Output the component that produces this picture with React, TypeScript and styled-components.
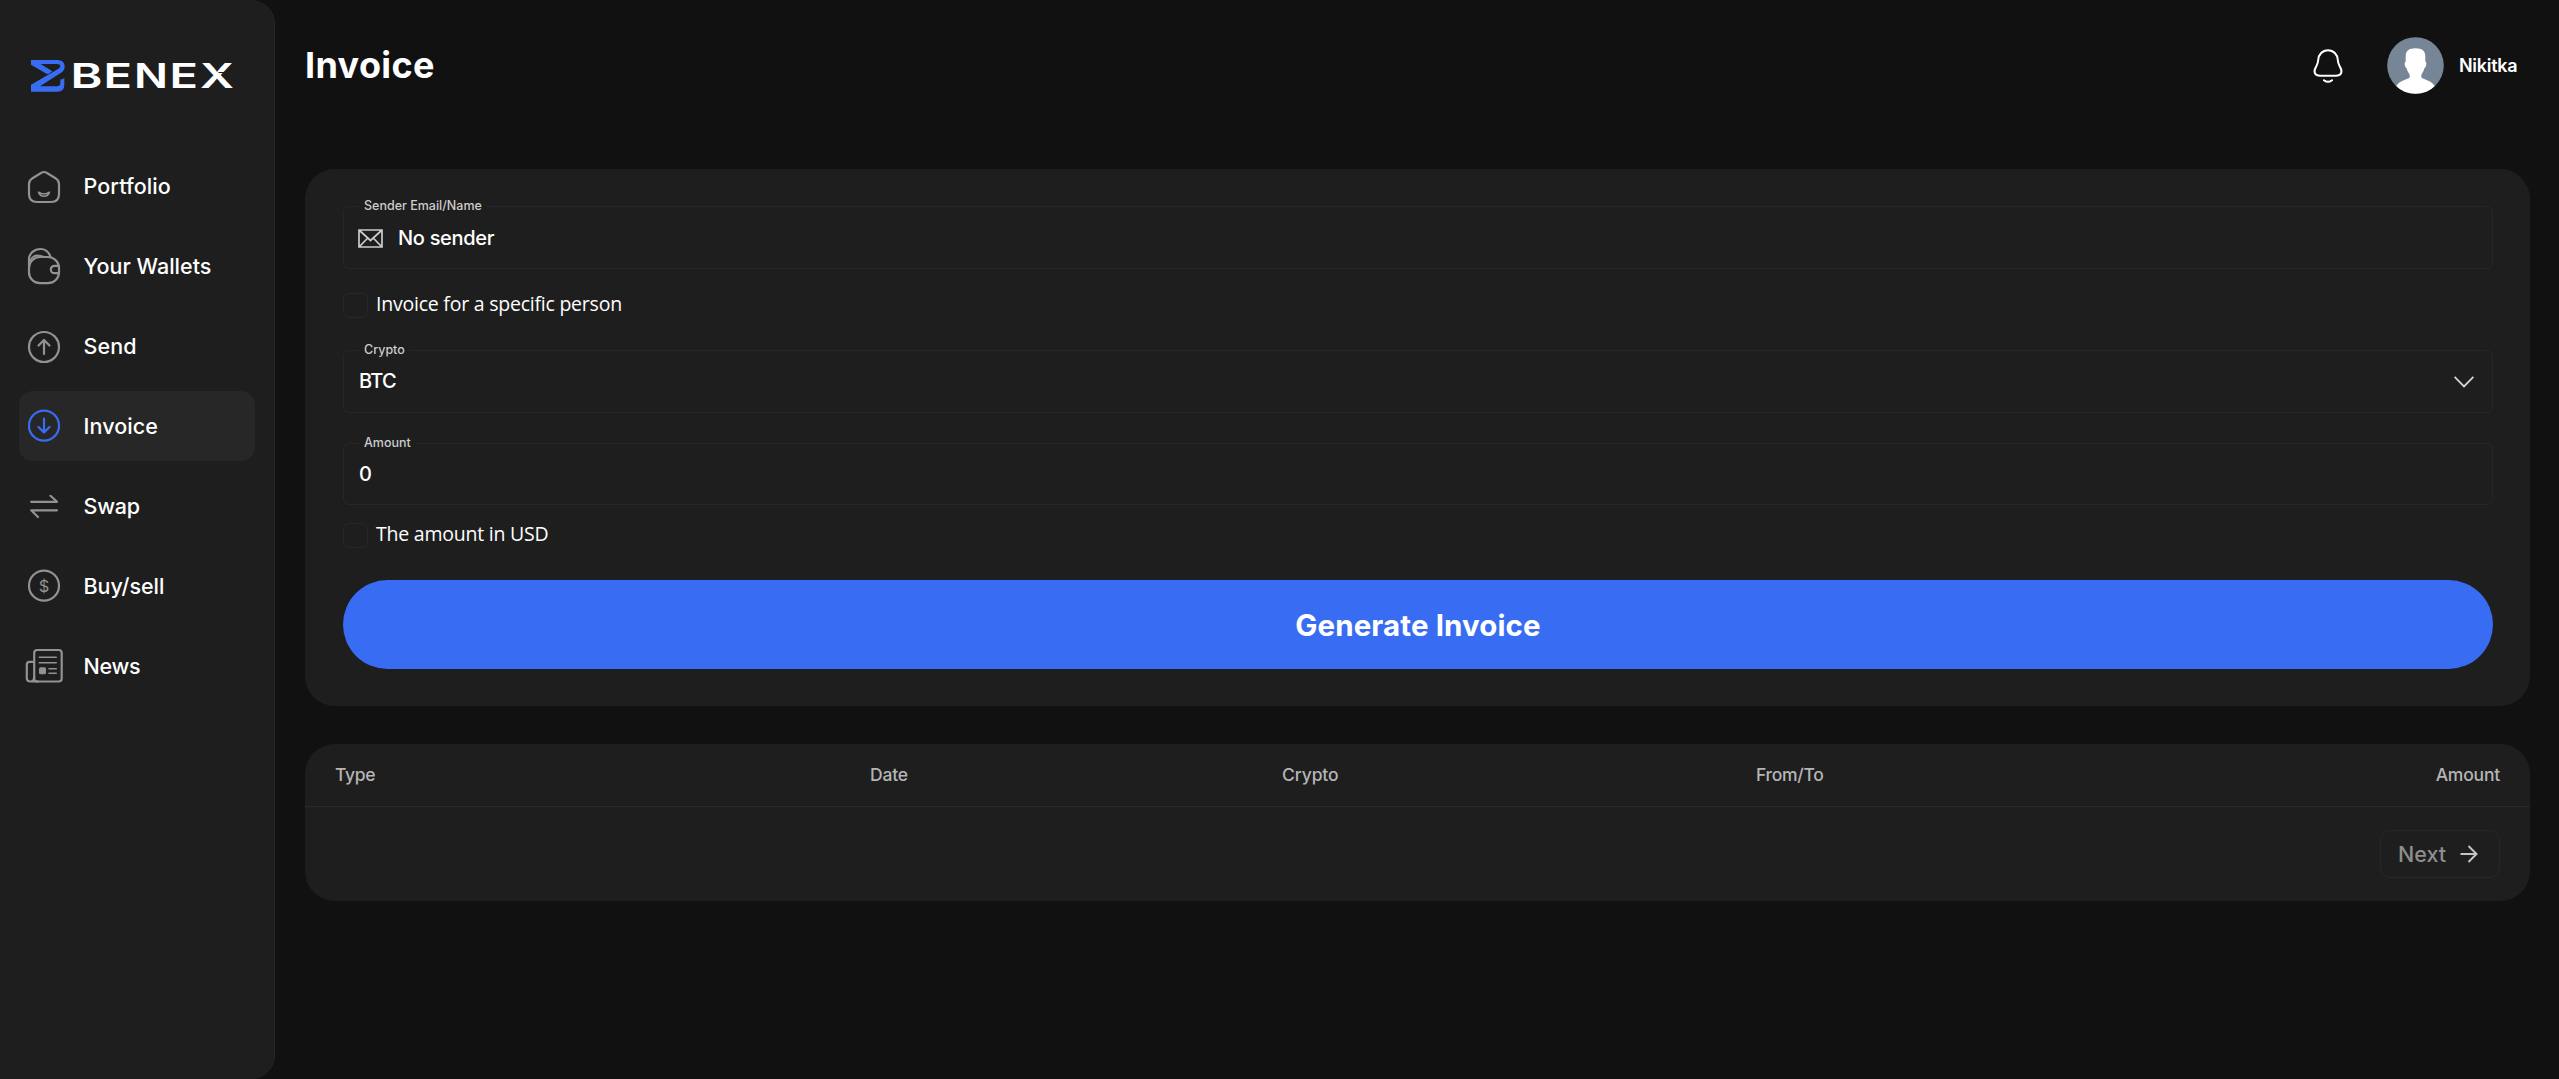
import React from 'react';
import styled, { createGlobalStyle } from 'styled-components';

const GlobalStyle = createGlobalStyle`
  *, *::before, *::after { box-sizing: border-box; }
  body {
    margin: 0;
    background: #111111;
    color: #ffffff;
    font-family: Inter, "Liberation Sans", sans-serif;
  }
`;

const Page = styled.div`
  display: flex;
  height: 1079px;
  overflow: hidden;
`;

const Sidebar = styled.aside`
  flex: none;
  width: 275px;
  height: 1079px;
  padding: 50px 19px 0;
  background: #1e1e1e;
  border-right: 1px solid #272727;
  border-radius: 0 24px 24px 0;
`;

const Logo = styled.div`
  display: flex;
  height: 50px;
  margin: 0 0 51px 12px;
`;

const Nav = styled.nav`
  display: flex;
  flex-direction: column;
  gap: 10px;
`;

const NavItem = styled.a<{ $active?: boolean }>`
  display: flex;
  align-items: center;
  gap: 19.5px;
  width: 236px;
  height: 70px;
  padding-left: 5px;
  border-radius: 14px;
  color: ${(p) => (p.$active ? '#386df3' : '#929292')};
  background: ${(p) => (p.$active ? '#272727' : 'transparent')};
`;

const NavLabel = styled.span<{ $track: number }>`
  color: #ffffff;
  font-size: 21.5px;
  font-weight: 500;
  line-height: 28px;
  letter-spacing: ${(p) => p.$track}px;
`;

const Main = styled.main`
  flex: 1;
  padding: 0 29px 0 30px;
`;

const Header = styled.header`
  display: flex;
  align-items: center;
  height: 131px;
  margin-bottom: 38px;
`;

const Title = styled.h1`
  flex: 1;
  margin: 0;
  padding-bottom: 1px;
  font-size: 36px;
  font-weight: 700;
  line-height: 44px;
  letter-spacing: 0.35px;
`;

const BellButton = styled.span`
  display: flex;
  margin-right: 43px;
`;

const Avatar = styled.span`
  display: flex;
  margin-right: 15px;
`;

const UserName = styled.span`
  width: 71px;
  font-size: 18px;
  font-weight: 600;
  letter-spacing: -0.3px;
`;

const Card = styled.section`
  border-radius: 30px;
  background: #1e1e1e;
`;

const FormCard = styled(Card)`
  display: flex;
  flex-direction: column;
  height: 537px;
  padding: 31px 37px 0 38px;
`;

const Field = styled.fieldset<{ $height: number; $top?: number }>`
  height: ${(p) => p.$height}px;
  min-width: 0;
  margin: ${(p) => p.$top ?? 0}px 0 0;
  padding: 0 15px;
  border: 1px solid #272727;
  border-radius: 6px;
`;

const Legend = styled.legend<{ $track?: number }>`
  height: 12px;
  padding: 0 5px;
  color: #cccccc;
  font-size: 12.5px;
  font-weight: 500;
  line-height: 12px;
  letter-spacing: ${(p) => p.$track ?? 0}px;
`;

const FieldRow = styled.div<{ $height: number }>`
  display: flex;
  align-items: center;
  height: ${(p) => p.$height}px;
`;

const FieldValue = styled.span<{ $track?: number }>`
  flex: 1;
  font-size: 20px;
  font-weight: 500;
  line-height: 26px;
  letter-spacing: ${(p) => p.$track ?? 0}px;
`;

const CheckRow = styled.label<{ $top: number; $bottom: number }>`
  display: flex;
  align-items: center;
  gap: 8px;
  height: 25px;
  margin: ${(p) => p.$top}px 0 ${(p) => p.$bottom}px;
`;

const CheckBox = styled.span`
  width: 25px;
  height: 25px;
  border: 1px solid #272727;
  border-radius: 6px;
`;

const CheckText = styled.span`
  padding-bottom: 3px;
  font-family: "Open Sans", "Noto Sans", sans-serif;
  font-size: 19.5px;
  line-height: 24px;
  letter-spacing: -0.23px;
`;

const SubmitButton = styled.button`
  height: 89px;
  padding: 0;
  border: 0;
  border-radius: 45px;
  background: #386df3;
  color: #ffffff;
  font-family: inherit;
  font-size: 29.5px;
  font-weight: 700;
  letter-spacing: 0.1px;
`;

const TableCard = styled(Card)`
  height: 157px;
  margin-top: 38px;
`;

const TableHead = styled.div`
  display: grid;
  grid-template-columns: 535px 412px 474px 1fr auto;
  align-items: center;
  height: 63px;
  padding: 0 30px;
  border-bottom: 1px solid #292929;
`;

const HeadCell = styled.span<{ $track: number }>`
  color: #b5b5b5;
  font-size: 17.5px;
  font-weight: 500;
  line-height: 24px;
  letter-spacing: ${(p) => p.$track}px;
`;

const Pager = styled.div`
  display: flex;
  justify-content: flex-end;
  padding: 23px 30px 0;
`;

const NextButton = styled.button`
  display: flex;
  align-items: center;
  gap: 14px;
  width: 120px;
  height: 48px;
  padding: 0 0 0 17px;
  border: 1px solid #272727;
  border-radius: 10px;
  background: transparent;
  color: #8e8e8e;
  font-family: inherit;
  font-size: 21.5px;
  font-weight: 500;
  letter-spacing: 0;
`;

const Envelope = styled.svg`
  flex: none;
  margin: 1px 15px 0 -1px;
`;

const Chevron = styled.svg`
  flex: none;
  margin: 2px 3px 0 0;
`;

const Icon = ({ children }: { children: React.ReactNode }) => (
  <svg width="40" height="40" viewBox="0 0 40 40" fill="none" stroke="currentColor" strokeWidth="2.2" strokeLinecap="round" strokeLinejoin="round">
    {children}
  </svg>
);

const PortfolioIcon = () => (
  <Icon>
    <path d="M17 7Q20 5 23 7L31.500 12.200Q35 14.500 35 18V28Q35 36 27 36H13Q5 36 5 28V18Q5 14.500 8.500 12.200Z" />
    <path strokeWidth="1.500" d="M14.600 26.200Q20 29.800 25.400 26.200Q24.200 30.200 20 30.200Q15.800 30.200 14.600 26.200Z" />
  </Icon>
);

const WalletIcon = () => (
  <Icon>
    <rect x="5" y="11" width="30" height="26.200" rx="11" />
    <path d="M5 20V13.500C5 7 10.500 3 16.500 3C21.500 3 24.800 6.200 26.600 10.800" />
    <path strokeWidth="1.800" d="M5.500 18C6 12.500 9.500 9.300 14 9.500C17 9.500 18 10.500 20 11" />
    <path d="M35 19.800H30.500a3.700 3.700 0 0 0 0 7.400H35" />
  </Icon>
);

const SendIcon = () => (
  <Icon>
    <circle cx="20" cy="21" r="15" />
    <path d="M20 28V14.200M14.500 19.500L20 14L25.500 19.500" />
  </Icon>
);

const InvoiceIcon = () => (
  <Icon>
    <circle cx="20" cy="19.700" r="15" />
    <path d="M20 12.700V26.400M14.500 21L20 26.500L25.500 21" />
  </Icon>
);

const SwapIcon = () => (
  <Icon>
    <path d="M7.200 15.800H33L26.500 9.800M33 24.300H7.200L14 31" />
  </Icon>
);

const DollarIcon = () => (
  <Icon>
    <circle cx="20" cy="19.700" r="15" />
    <text x="20" y="25.600" textAnchor="middle" fontFamily="Inter, sans-serif" fontSize="16.500" fontWeight="400" fill="currentColor" stroke="none">$</text>
  </Icon>
);

const NewsIcon = () => (
  <Icon>
    <rect x="10.200" y="4" width="27.500" height="31.500" rx="3" />
    <path d="M10 15.800H5.500Q2.800 15.800 2.800 18.500V32Q2.800 35.500 6.500 35.500H14M10.200 31Q10.200 35 7 35.500" />
    <path strokeWidth="1.500" d="M15.300 11.300H32.300M15.300 16.800H32.300M25 22.700H32.300M25 27.300H32.300" />
    <rect x="15" y="21.300" width="7" height="7" rx="1.500" fill="currentColor" stroke="none" />
  </Icon>
);

const navItems = [
  { label: 'Portfolio', icon: PortfolioIcon, track: 0.1 },
  { label: 'Your Wallets', icon: WalletIcon, track: 0 },
  { label: 'Send', icon: SendIcon, track: 0.1 },
  { label: 'Invoice', icon: InvoiceIcon, track: 0.1, active: true },
  { label: 'Swap', icon: SwapIcon, track: -0.2 },
  { label: 'Buy/sell', icon: DollarIcon, track: -0.05 },
  { label: 'News', icon: NewsIcon, track: -0.3 },
];

const BrandMark = () => (
  <svg width="205" height="50" viewBox="31 50 205 50">
    <svg x="31" y="60" width="34" height="32" viewBox="33 30 102 96" preserveAspectRatio="none">
      <path
        fill="#386df3"
        d="M33 30H112Q134 31 134 50Q134 62 122 69L60 109H112Q121 108 121 98V88Q128 89 133 84V104Q133 125 112 125H33V104L113 58Q121 54 121 49Q120 42 111 42H62L97 64L86 71Q82 73 77 70L33 44Z"
      />
    </svg>
    <g fill="#ffffff" fontFamily="Inter, sans-serif" fontSize="34.500" fontWeight="600">
      <text x="70.500" y="88" textLength="32" lengthAdjust="spacingAndGlyphs">B</text>
      <text x="103.500" y="88" textLength="28.500" lengthAdjust="spacingAndGlyphs">E</text>
      <text x="134" y="88" textLength="34" lengthAdjust="spacingAndGlyphs">N</text>
      <text x="169.500" y="88" textLength="28.500" lengthAdjust="spacingAndGlyphs">E</text>
      <text x="200" y="88" textLength="34" lengthAdjust="spacingAndGlyphs">X</text>
    </g>
    <path d="M218.500 72.500H228" stroke="#1e1e1e" strokeWidth="1" />
  </svg>
);

const Bell = () => (
  <svg width="32" height="36" viewBox="0 0 32 36" fill="none" stroke="#ffffff" strokeWidth="2" strokeLinecap="round">
    <path d="M16 2.200C10.500 2.200 6.500 6.500 6.200 12C6 16 4.600 17.500 3.400 20C1.300 24.500 3.100 27.500 8 27.800H24C28.900 27.500 30.700 24.500 28.600 20C27.400 17.500 26 16 25.800 12C25.500 6.500 21.500 2.200 16 2.200Z" />
    <path d="M12 32.200Q16 35.400 20 32.200" />
  </svg>
);

const AvatarPicture = () => (
  <svg width="57" height="57" viewBox="0 0 57 57">
    <defs>
      <clipPath id="avatar-clip"><circle cx="28.500" cy="28.500" r="28.300" /></clipPath>
    </defs>
    <g clipPath="url(#avatar-clip)">
      <rect width="57" height="57" fill="#768696" />
      <path fill="#ffffff" d="M28.500 11.300C35 11.300 38.300 14 38.300 19V24.500C40 25 39.500 30 37.300 31.500C36.800 34.500 34.800 36.500 34.300 38V40.500C38 43 47.500 44 48.500 52V57H8.500V52C9.500 44 19 43 22.700 40.500V38C22.200 36.500 20.200 34.500 19.700 31.500C17.500 30 17 25 18.700 24.500V19C18.700 14 22 11.300 28.500 11.300Z" />
    </g>
  </svg>
);

export default function App() {
  return (
    <>
      <GlobalStyle />
      <Page>
        <Sidebar>
          <Logo><BrandMark /></Logo>
          <Nav>
            {navItems.map(({ label, icon: Glyph, track, active }) => (
              <NavItem key={label} $active={active}>
                <Glyph />
                <NavLabel $track={track}>{label}</NavLabel>
              </NavItem>
            ))}
          </Nav>
        </Sidebar>
        <Main>
          <Header>
            <Title>Invoice</Title>
            <BellButton><Bell /></BellButton>
            <Avatar><AvatarPicture /></Avatar>
            <UserName>Nikitka</UserName>
          </Header>
          <FormCard>
            <Field $height={69}>
              <Legend>Sender Email/Name</Legend>
              <FieldRow $height={52}>
                <Envelope width="25" height="19" viewBox="0 0 25 19" fill="none" stroke="#cccccc" strokeWidth="1.700">
                  <path d="M1 1H24V18H1ZM1 1L12.500 11.500L24 1M1 18L9.800 9M24 18L15.200 9" />
                </Envelope>
                <FieldValue $track={-0.3}>No sender</FieldValue>
              </FieldRow>
            </Field>
            <CheckRow $top={24} $bottom={26}>
              <CheckBox />
              <CheckText>Invoice for a specific person</CheckText>
            </CheckRow>
            <Field $height={69}>
              <Legend>Crypto</Legend>
              <FieldRow $height={50}>
                <FieldValue $track={-0.7}>BTC</FieldValue>
                <Chevron width="20" height="12" viewBox="0 0 20 12" fill="none" stroke="#d6d6d6" strokeWidth="1.800">
                  <path d="M0.600 0.800L10 10.400L19.400 0.800" />
                </Chevron>
              </FieldRow>
            </Field>
            <Field $height={68} $top={24}>
              <Legend>Amount</Legend>
              <FieldRow $height={50}>
                <FieldValue>0</FieldValue>
              </FieldRow>
            </Field>
            <CheckRow $top={18} $bottom={32}>
              <CheckBox />
              <CheckText>The amount in USD</CheckText>
            </CheckRow>
            <SubmitButton>Generate Invoice</SubmitButton>
          </FormCard>
          <TableCard>
            <TableHead>
              <HeadCell $track={-0.35}>Type</HeadCell>
              <HeadCell $track={-0.2}>Date</HeadCell>
              <HeadCell $track={-0.1}>Crypto</HeadCell>
              <HeadCell $track={-0.3}>From/To</HeadCell>
              <HeadCell $track={-0.2}>Amount</HeadCell>
            </TableHead>
            <Pager>
              <NextButton>
                Next
                <svg width="18" height="18" viewBox="0 0 18 18" fill="none" stroke="#c4c4c4" strokeWidth="2">
                  <path d="M0.500 9H16.500M8.500 1L16.500 9L8.500 17" />
                </svg>
              </NextButton>
            </Pager>
          </TableCard>
        </Main>
      </Page>
    </>
  );
}
